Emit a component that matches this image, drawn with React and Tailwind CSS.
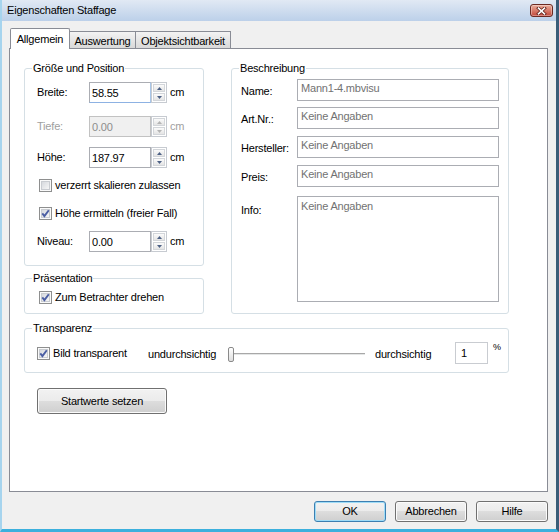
import React from 'react';

// Vista-style property dialog "Eigenschaften Staffage"

const Group = ({ title, className = '', children }) => (
  <div className={`relative border border-[#d5dfe5] rounded-[3px] ${className}`}>
    <span className="absolute -top-[7px] left-[7px] px-[1px] bg-white leading-[13px]">{title}</span>
    {children}
  </div>
);

const CheckBox = ({ checked, label, className = '' }) => (
  <div className={`flex items-center gap-[3px] h-[13px] ${className}`}>
    <svg width="13" height="13" viewBox="0 0 13 13" className="shrink-0">
      <defs>
        <linearGradient id="cbfill" x1="0" y1="0" x2="1" y2="1">
          <stop offset="0" stopColor="#d4d7dc" />
          <stop offset="1" stopColor="#f8f8f8" />
        </linearGradient>
      </defs>
      <rect x="0.5" y="0.5" width="12" height="12" fill="#fafafa" stroke="#8e8f8f" />
      <rect x="2.5" y="2.5" width="8" height="8" fill="url(#cbfill)" stroke="#c9ccd1" />
      {checked && (
        <path d="M3.3 6.4 L5.4 9.1 L9.8 3.2" fill="none" stroke="#4b5ea3" strokeWidth="1.9" />
      )}
    </svg>
    <span className="leading-[13px] whitespace-nowrap">{label}</span>
  </div>
);

const Arrow = ({ up, disabled }) => (
  <svg width="5" height="3" viewBox="0 0 5 3">
    <polygon points={up ? '0,3 5,3 2.5,0' : '0,0 5,0 2.5,3'} fill={disabled ? '#b4b4b4' : '#4d6185'} />
  </svg>
);

const Spinner = ({ disabled }) => (
  <div className="w-[16px] h-[21px] flex flex-col gap-px p-px border border-[#c7cbd1] bg-white shrink-0">
    <div className="flex-1 flex items-center justify-center border border-[#d3d6da] bg-linear-to-b from-[#fbfbfb] to-[#e4e4e4]">
      <Arrow up disabled={disabled} />
    </div>
    <div className="flex-1 flex items-center justify-center border border-[#d3d6da] bg-linear-to-b from-[#fbfbfb] to-[#e4e4e4]">
      <Arrow disabled={disabled} />
    </div>
  </div>
);

const SpinField = ({ label, value, disabled, focused, className = '' }) => (
  <div className={`flex items-center h-[21px] ${className}`}>
    <span className={`w-[52px] ${disabled ? 'text-[#a0a0a0]' : ''}`}>{label}</span>
    <div
      className={`w-[62px] h-[21px] border pl-[2px] pt-[2px] flex items-center ${
        disabled
          ? 'bg-[#f0f0f0] border-[#c2c2c2] text-[#8d8d8d]'
          : focused
          ? 'bg-white border-[#abadb3] border-b-[#8db2e3] border-r-[#a9c6e8]'
          : 'bg-white border-[#abadb3]'
      }`}
    >
      {value}
    </div>
    <Spinner disabled={disabled} />
    <span className={`ml-[3px] ${disabled ? 'text-[#a0a0a0]' : ''}`}>cm</span>
  </div>
);

const TextRow = ({ label, value, className = '' }) => (
  <div className={`flex items-center h-[22px] ${className}`}>
    <span className="w-[56px] pt-[2px]">{label}</span>
    <div className="w-[202px] h-[22px] border border-[#abadb3] bg-white text-[#727272] pl-[3px] pb-[3px] flex items-center">
      {value}
    </div>
  </div>
);

const Button = ({ children, focused, className = '' }) => (
  <div
    className={`flex items-center justify-center rounded-[3px] border bg-[linear-gradient(to_bottom,#f2f2f2_0%,#ebebeb_50%,#dddddd_50%,#cfcfcf_100%)] ${
      focused
        ? 'border-[#3c7fb1] shadow-[inset_0_0_0_1px_#9fdcf7]'
        : 'border-[#707070] shadow-[inset_0_0_0_1px_#fbfbfb]'
    } ${className}`}
  >
    {children}
  </div>
);

export default function App() {
  return (
    <div className="w-[559px] h-[532px] flex flex-col overflow-hidden bg-[#f0f0f0] border-l-2 border-l-[#a6d4ee] border-r-[3px] border-r-[#3a5d78] border-b-[3px] border-b-[#3cb0dd] text-[11px] tracking-[-0.2px] text-black font-['Liberation_Sans',Arial,sans-serif]">
      {/* title bar */}
      <div className="h-[21px] shrink-0 flex items-center justify-between pl-[5px] pr-[3px] bg-linear-to-b from-[#e1e9f4] to-[#bcd0e9]">
        <span className="text-[11px]">Eigenschaften Staffage</span>
        <div className="w-[23px] h-[13px] rounded-[3px] border border-[#6c2a22] bg-linear-to-b from-[#e9ad9c] to-[#c2463a] flex items-center justify-center shadow-[inset_0_0_0_1px_rgba(255,255,255,0.35)]">
          <svg width="11" height="8" viewBox="0 0 11 8">
            <path d="M2.5 1.2 L8.5 6.8 M8.5 1.2 L2.5 6.8" stroke="#5a1d16" strokeWidth="3.2" strokeLinecap="square" />
            <path d="M2.5 1.2 L8.5 6.8 M8.5 1.2 L2.5 6.8" stroke="#ffffff" strokeWidth="1.6" strokeLinecap="square" />
          </svg>
        </div>
      </div>

      <div className="flex-1 flex flex-col pl-[7px] pr-[8px]">
        {/* tabs */}
        <div className="mt-[7px] h-[20px] flex items-end pl-[1px]">
          <div className="relative z-10 w-[60px] h-[21px] -mb-px flex items-center justify-center bg-white border border-b-0 border-[#898c95] rounded-t-[2px]">
            Allgemein
          </div>
          <div className="w-[66px] h-[17px] pt-[2px] flex items-center justify-center border-t border-r border-[#898c95] bg-linear-to-b from-[#f3f3f3] to-[#d9d9d9]">
            Auswertung
          </div>
          <div className="w-[95px] h-[17px] pt-[2px] flex items-center justify-center border-t border-r border-[#898c95] bg-linear-to-b from-[#f3f3f3] to-[#d9d9d9]">
            Objektsichtbarkeit
          </div>
        </div>

        {/* tab panel */}
        <div className="h-[444px] border border-[#898c95] bg-white pl-[14px] pt-[19px] flex flex-col">
          <div className="flex items-start gap-[27px]">
            <div className="w-[180px] flex flex-col">
              <Group title="Größe und Position" className="h-[198px] pt-[13px] pl-[12px] flex flex-col">
                <SpinField label="Breite:" value="58.55" focused />
                <SpinField label="Tiefe:" value="0.00" disabled className="mt-[13px]" />
                <SpinField label="Höhe:" value="187.97" className="mt-[10px]" />
                <CheckBox label="verzerrt skalieren zulassen" className="mt-[11px] ml-[2px]" />
                <CheckBox checked label="Höhe ermitteln (freier Fall)" className="mt-[15px] ml-[2px]" />
                <SpinField label="Niveau:" value="0.00" className="mt-[11px]" />
              </Group>
              <Group title="Präsentation" className="mt-[12px] h-[36px] pt-[12px] pl-[14px]">
                <CheckBox checked label="Zum Betrachter drehen" />
              </Group>
            </div>

            <Group title="Beschreibung" className="w-[278px] h-[246px] pt-[10px] pl-[9px] flex flex-col">
              <TextRow label="Name:" value="Mann1-4.mbvisu" />
              <TextRow label="Art.Nr.:" value="Keine Angaben" className="mt-[6px]" />
              <TextRow label="Hersteller:" value="Keine Angaben" className="mt-[7px]" />
              <TextRow label="Preis:" value="Keine Angaben" className="mt-[7px]" />
              <div className="flex items-start mt-[9px]">
                <span className="w-[56px] pt-[6px]">Info:</span>
                <div className="w-[202px] h-[106px] border border-[#abadb3] bg-white text-[#727272] pl-[3px] pt-[3px] leading-[13px]">
                  Keine Angaben
                </div>
              </div>
            </Group>
          </div>

          <Group title="Transparenz" className="mt-[14px] w-[485px] h-[45px] pt-[13px] pl-[12px]">
            <div className="flex items-center h-[22px]">
              <CheckBox checked label="Bild transparent" className="w-[111px] shrink-0" />
              <span className="w-[80px] shrink-0 pt-[2px]">undurchsichtig</span>
              <div className="w-[137px] h-[15px] flex items-center mt-[3px]">
                <div className="w-[6px] h-[15px] border border-[#8a8a8a] rounded-[2px] bg-linear-to-b from-white to-[#dedede]" />
                <div className="flex-1 h-[3px] border-t border-t-[#a8a8a8] border-b border-b-white bg-[#e4e6e6]" />
              </div>
              <span className="ml-[10px] w-[80px] shrink-0 pt-[2px]">durchsichtig</span>
              <div className="w-[33px] h-[22px] border border-[#c9ccd1] bg-white pl-[5px] flex items-center pt-[1px]">1</div>
              <span className="ml-[5px] self-start text-[9px] leading-[10px]">%</span>
            </div>
          </Group>

          <Button className="mt-[15px] ml-[13px] w-[130px] h-[26px]">Startwerte setzen</Button>
        </div>

        {/* dialog buttons */}
        <div className="mt-[9px] flex justify-end gap-[9px]">
          <Button focused className="w-[72px] h-[21px]">OK</Button>
          <Button className="w-[72px] h-[21px]">Abbrechen</Button>
          <Button className="w-[72px] h-[21px]">Hilfe</Button>
        </div>
      </div>
    </div>
  );
}
